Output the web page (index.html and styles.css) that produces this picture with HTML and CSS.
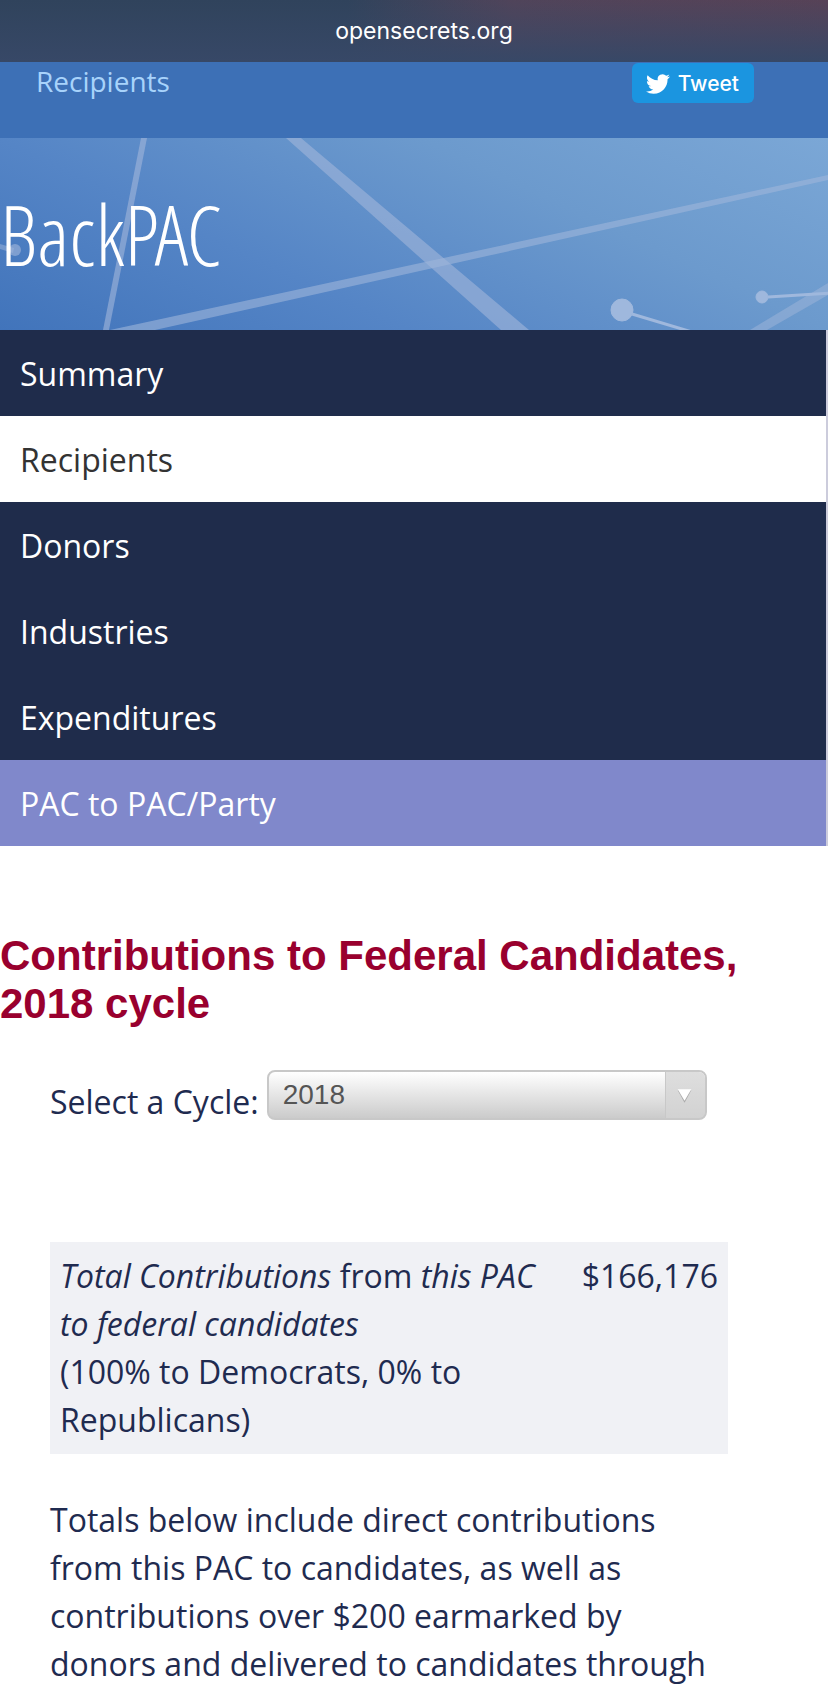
FILE: index.html
```html
<!DOCTYPE html>
<html lang="en">
<head>
<meta charset="utf-8">
<meta name="viewport" content="width=device-width, initial-scale=1">
<title>BackPAC Recipients</title>
<link rel="stylesheet" href="styles.css">
</head>
<body>
<div class="address-bar">opensecrets.org</div>
<div class="crumbs">
  <a class="crumb" href="#">Recipients</a>
  <button class="tweet" type="button">
    <svg class="bird" viewBox="0 0 24 24" aria-hidden="true"><path fill="currentColor" d="M23.953 4.57a10 10 0 01-2.825.775 4.958 4.958 0 002.163-2.723c-.951.555-2.005.959-3.127 1.184a4.92 4.92 0 00-8.384 4.482C7.69 8.095 4.067 6.13 1.64 3.162a4.822 4.822 0 00-.666 2.475c0 1.71.87 3.213 2.188 4.096a4.904 4.904 0 01-2.228-.616v.06a4.923 4.923 0 003.946 4.827 4.996 4.996 0 01-2.212.085 4.936 4.936 0 004.604 3.417 9.867 9.867 0 01-6.102 2.105c-.39 0-.779-.023-1.17-.067a13.995 13.995 0 007.557 2.209c9.053 0 13.998-7.496 13.998-13.985 0-.21 0-.42-.015-.63A9.935 9.935 0 0024 4.59z"/></svg>
    <span>Tweet</span>
  </button>
</div>
<header class="hero">
  <svg class="hero-art" viewBox="0 0 828 192" preserveAspectRatio="xMidYMid slice" aria-hidden="true">
    <g fill="#9fb5da" fill-opacity=".62">
      <path d="M141 0h6L109 192h-6z"/>
      <path d="M286 0h15L529 192h-28z"/>
      <path d="M110 192L828 37v5L155 192z" fill-opacity=".6"/>
      <path d="M750 192L828 145v12L767 192z" fill-opacity=".5"/>
      <path d="M0 106l14 4-1 5-13-4z" fill-opacity=".5"/>
      <circle cx="15" cy="112" r="6"/>
    </g>
    <g fill="#9fb8dd" stroke="#9fb8dd">
      <path d="M632 176l60 18M768 159l62-4" stroke-width="3"/>
      <circle cx="622" cy="172" r="11" />
      <circle cx="762" cy="159" r="6" />
    </g>
  </svg>
  <h1 class="hero-title">BackPAC</h1>
</header>
<nav class="tabs">
  <a class="tab" href="#">Summary</a>
  <a class="tab tab-current" href="#" aria-current="page">Recipients</a>
  <a class="tab" href="#">Donors</a>
  <a class="tab" href="#">Industries</a>
  <a class="tab" href="#">Expenditures</a>
  <a class="tab tab-highlight" href="#">PAC to PAC/Party</a>
</nav>
<main class="content">
  <h2 class="heading">Contributions to Federal Candidates, 2018 cycle</h2>
  <div class="body">
    <form class="cycle">
      <label for="cycle">Select a Cycle:</label>
      <div class="select-wrap">
        <select id="cycle" class="select"><option>2018</option></select>
        <svg class="arrow" viewBox="0 0 40 46" aria-hidden="true"><path d="M12 18h14l-7 13z" fill="#aaa"/><path d="M12 17h14l-7 12z" fill="#fff"/></svg>
      </div>
    </form>
    <table class="totals">
      <tr>
        <td><em>Total Contributions</em> from <em>this PAC to federal candidates</em><br>(100% to Democrats, 0% to Republicans)</td>
        <td class="amount">$166,176</td>
      </tr>
    </table>
    <p class="note">Totals below include direct contributions from this PAC to candidates, as well as contributions over $200 earmarked by donors and delivered to candidates through</p>
  </div>
</main>
</body>
</html>
```
FILE: styles.css
```css
* { box-sizing: border-box; }
body {
  margin: 0;
  background: #fff;
  color: #1f2b50;
  font: 32px/48px "Open Sans", sans-serif;
}
.address-bar {
  height: 62px;
  padding-left: 20px;
  text-align: center;
  color: #fff;
  font: 23px/62px Inter, sans-serif;
  background:
    linear-gradient(transparent, #374867),
    linear-gradient(90deg, #30435c 42%, #50445a 62%, #574257);
}
.crumbs {
  display: flex;
  justify-content: space-between;
  align-items: flex-start;
  height: 76px;
  padding: 1px 74px 0 36px;
  background: #3d70b6;
}
.crumb {
  color: #a8d3fb;
  font-size: 28px;
  line-height: 36px;
  text-decoration: none;
}
.tweet {
  display: flex;
  align-items: center;
  gap: 8px;
  height: 40px;
  padding: 1px 15px 0 14px;
  border: 0;
  border-radius: 6px;
  background: #1b95e0;
  color: #fff;
  font: 500 21px/40px Inter, sans-serif;
}
.bird { width: 24px; height: 24px; }
.hero {
  position: relative;
  display: flex;
  align-items: center;
  height: 192px;
  overflow: hidden;
  background: linear-gradient(25deg, #4174bb, #5585c6 33%, #6c9acd 67%, #7ba7d6);
}
.hero-art {
  position: absolute;
  inset: 0;
  width: 100%;
  height: 100%;
}
.hero-title {
  position: relative;
  margin: 0;
  color: #fff;
  font: 300 84px/96px "Open Sans Condensed Light", "Open Sans Condensed", "Open Sans", sans-serif;
}
.tabs {
  display: flex;
  flex-direction: column;
  border-right: 2px solid #ccccdc;
}
.tab {
  padding: 20px 20px 18px;
  background: #1f2c4b;
  color: #fff;
  text-decoration: none;
}
.tab-current { background: #fff; color: #333; }
.tab-highlight { background: #8088cb; }
.heading {
  margin: 86px 0 42px;
  padding-right: 80px;
  color: #99002e;
  font: bold 42px/48px "Liberation Sans", Arial, sans-serif;
}
.body { padding: 0 100px 0 50px; }
.cycle {
  display: flex;
  align-items: flex-start;
  gap: 8px;
}
.cycle label { padding-top: 8px; }
.select-wrap {
  position: relative;
  flex: 0 1 440px;
}
.select {
  display: block;
  width: 100%;
  height: 50px;
  padding: 0 14px;
  border: 2px solid #c8c8c8;
  border-radius: 8px;
  appearance: none;
  background: linear-gradient(#fff, #cbcbcb);
  color: #555;
  font: 28px/46px "Liberation Sans", Arial, sans-serif;
}
.arrow {
  position: absolute;
  top: 2px;
  right: 2px;
  width: 40px;
  height: 46px;
  border-left: 1px solid #c8c8c8;
  border-radius: 0 6px 6px 0;
  background: linear-gradient(#dedede, #d2d2d2);
  pointer-events: none;
}
.totals {
  width: 100%;
  margin: 116px 0 42px;
  border-collapse: collapse;
  background: #f0f1f5;
}
.totals td { padding: 10px; vertical-align: top; }
.totals em { font-family: "Open Sans Regular", "OpenSans-Regular", "Open Sans", sans-serif; }
.totals .amount { text-align: right; }
.note { margin: 0; }
```
